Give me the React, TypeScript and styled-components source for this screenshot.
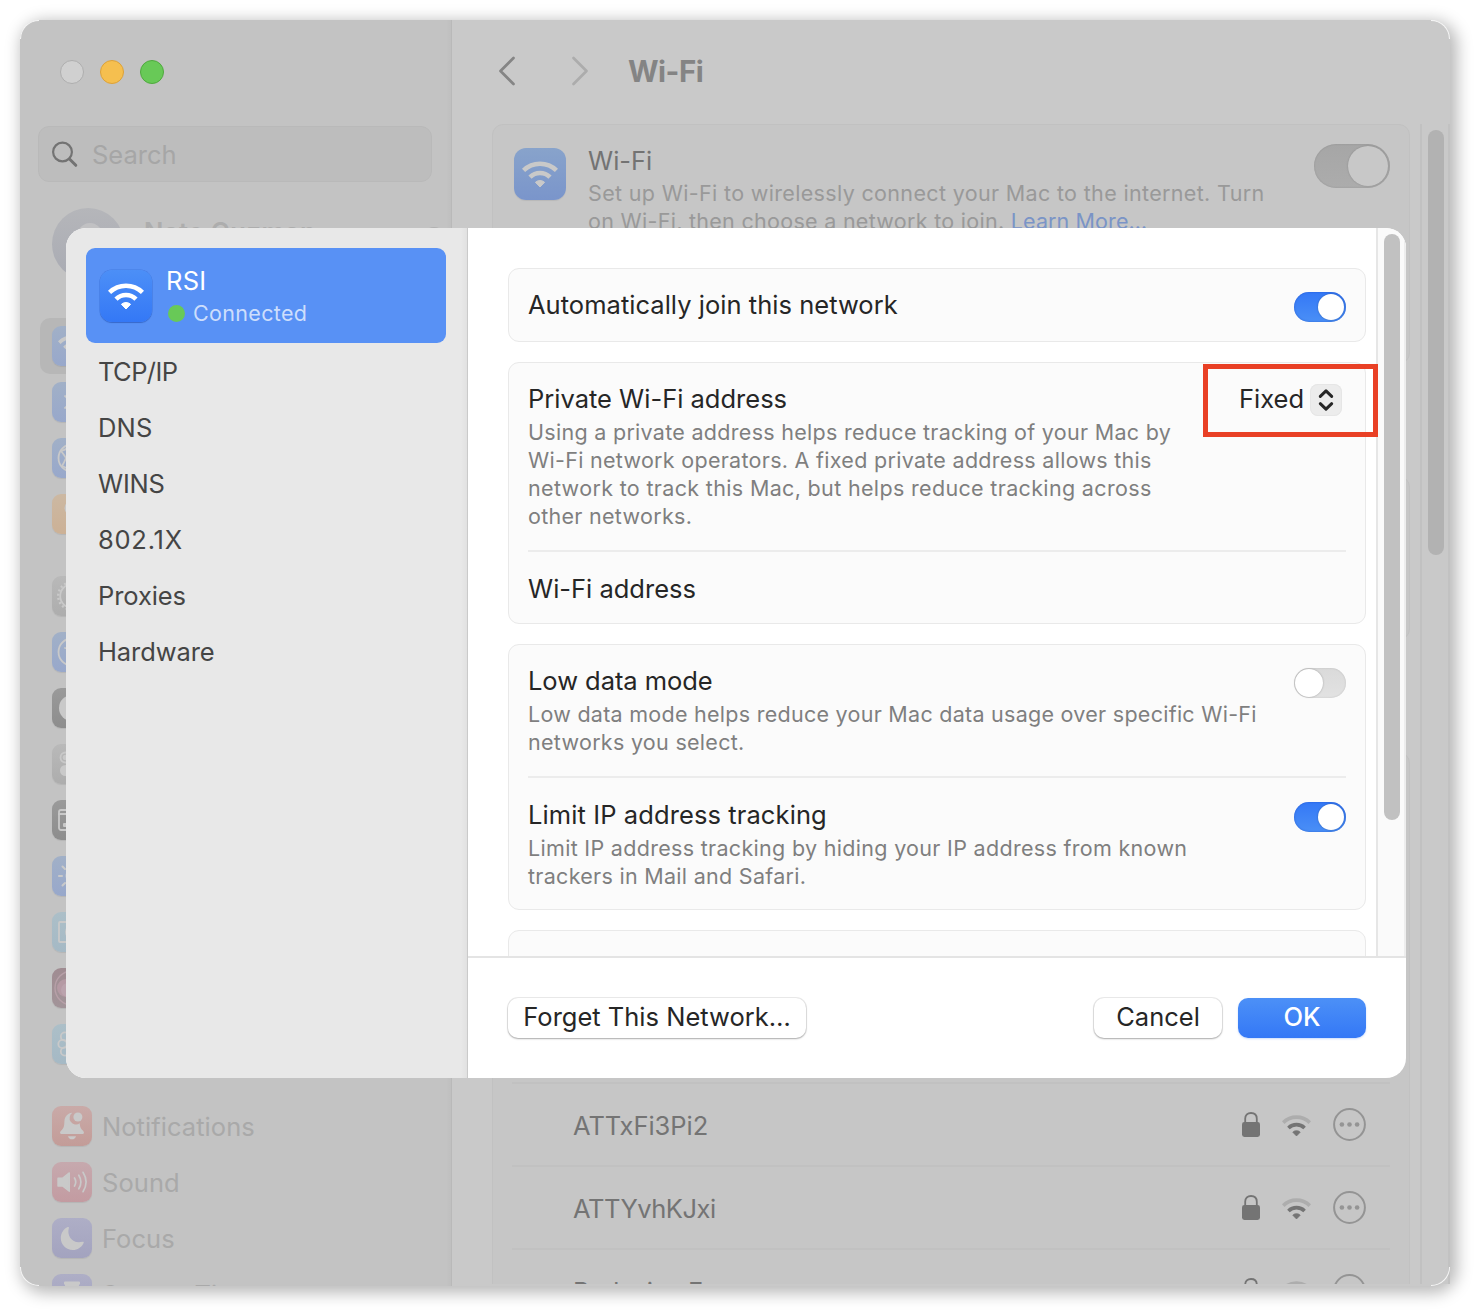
import React from "react";
import styled, { createGlobalStyle, css } from "styled-components";

const GlobalStyle = createGlobalStyle`
  *, *::before, *::after { box-sizing: border-box; }
  body {
    margin: 0;
    background: #fff;
    font-family: Inter, "Liberation Sans", sans-serif;
    font-size: 25.5px;
  }
  svg { display: block; flex: none; }
`;

/* ---------- window ---------- */

const Desktop = styled.div`
  width: 1480px;
  height: 1316px;
  padding: 20px 30px 30px 20px;
  overflow: hidden;
`;

const Window = styled.div`
  position: relative;
  display: grid;
  grid-template-columns: 432px 1fr;
  width: 1430px;
  height: 1266px;
  border-radius: 20px;
  background: #c9c9c9;
  box-shadow: 4px 4px 16px 3px rgba(0, 0, 0, 0.28);
`;

const Corner = styled.span<{ $v: "top" | "bottom"; $h: "left" | "right" }>`
  position: absolute;
  ${(p) => p.$v}: 0;
  ${(p) => p.$h}: 0;
  width: 19px;
  height: 19px;
  border: 0 solid rgba(255, 255, 255, 0.85);
  border-${(p) => p.$v}-width: 1px;
  border-${(p) => p.$h}-width: 1px;
  border-${(p) => p.$v}-${(p) => p.$h}-radius: 20px;
`;

/* ---------- sidebar ---------- */

const Sidebar = styled.aside`
  display: flex;
  flex-direction: column;
  height: 1266px;
  overflow: hidden;
  border-right: 1px solid #b9b9b9;
  border-radius: 20px 0 0 20px;
  background: linear-gradient(to right, transparent 426px, rgba(0, 0, 0, 0.02)), #c3c3c3;
`;

const TrafficLights = styled.div`
  display: flex;
  gap: 16px;
  padding: 40px 0 0 40px;
`;

const Light = styled.span<{ $fill: string; $edge: string }>`
  width: 24px;
  height: 24px;
  border: 1px solid ${(p) => p.$edge};
  border-radius: 50%;
  background: ${(p) => p.$fill};
`;

const SearchField = styled.div`
  display: flex;
  align-items: center;
  gap: 14px;
  flex: none;
  height: 56px;
  margin: 42px 19px 0 18px;
  padding-left: 12px;
  border: 1px solid #b9b9b9;
  border-radius: 11px;
  background: #bdbdbd;
  color: #a6a6a6;
`;

const Profile = styled.div`
  display: flex;
  gap: 20px;
  flex: none;
  height: 72px;
  margin: 26px 6px 38px 32px;
`;

const Avatar = styled.span`
  display: flex;
  justify-content: center;
  width: 72px;
  height: 72px;
  padding-top: 15px;
  border-radius: 50%;
  background: linear-gradient(#b5b6ba, #a9abb3);
`;

const AvatarHead = styled.span`
  width: 28px;
  height: 32px;
  margin-left: 3px;
  border-radius: 50%;
  background: #c1c1c3;
`;

const ProfileName = styled.span`
  flex: 1;
  padding-top: 8px;
  line-height: 32px;
  font-weight: 600;
  letter-spacing: 0.5px;
  color: #adadad;
`;

const ProfileBadge = styled.span`
  width: 22px;
  height: 22px;
  margin-top: 19px;
  border-radius: 50%;
  background: #b0b0b0;
`;

const NavGroup = styled.nav`
  display: flex;
  flex-direction: column;
  flex: none;
  margin: 0 18px 26px 20px;
`;

const NavRow = styled.div<{ $selected?: boolean }>`
  display: flex;
  align-items: center;
  gap: 10px;
  height: 56px;
  padding-left: 12px;
  border-radius: 10px;
  background: ${(p) => (p.$selected ? "#b7b7b7" : "transparent")};
  color: #a9a9a9;
  letter-spacing: 0.05px;
`;

const Tile = styled.span<{ $size: number; $from: string; $to: string; $ring?: boolean }>`
  display: flex;
  align-items: center;
  justify-content: center;
  flex: none;
  width: ${(p) => p.$size}px;
  height: ${(p) => p.$size}px;
  border-radius: ${(p) => (p.$size > 40 ? 12 : 9)}px;
  background: linear-gradient(${(p) => p.$from}, ${(p) => p.$to});
  box-shadow: 0 1px 1px rgba(0, 0, 0, 0.07);
  ${(p) => p.$ring && css`box-shadow: 0 0 0 0.5px rgba(30, 80, 190, 0.35), 0 1px 1px rgba(20, 60, 150, 0.4);`}
`;

/* ---------- main pane ---------- */

const Main = styled.main`
  display: grid;
  grid-template-rows: 104px 1fr;
  height: 1264px;
  overflow: hidden;
`;

const Toolbar = styled.header`
  display: flex;
  align-items: center;
  padding: 0 0 2px 46px;
`;

const Title = styled.h1`
  margin: 0 0 0 39px;
  font-size: 29.5px;
  font-weight: 700;
  letter-spacing: -0.5px;
  line-height: 36px;
  color: #848484;
`;

const Nav = styled.span`
  margin-right: 55px;
  & + & { margin-right: 0; }
`;

const Scroller = styled.div`
  display: grid;
  grid-template-columns: 1fr 30px;
  min-height: 0;
`;

const Panels = styled.div`
  display: flex;
  flex-direction: column;
  gap: 112px;
  height: 1160px;
  padding: 0 10px 0 40px;
  overflow: hidden;
`;

const Panel = styled.section<{ $height?: number }>`
  flex: none;
  height: ${(p) => (p.$height ? `${p.$height}px` : "auto")};
  border: 1px solid #c1c1c1;
  border-radius: 11px;
  background: #c6c6c6;
`;

const WifiHeader = styled.div`
  display: flex;
  padding: 19px 19px 0 21px;
`;

const WifiCopy = styled.div`
  flex: 1;
  margin-left: 22px;
  color: #737373;
  line-height: 34px;
`;

const WifiTile = styled.div`
  padding-top: 4px;
`;

const Caption = styled.div<{ $color?: string }>`
  font-size: 21.5px;
  line-height: 28px;
  letter-spacing: 0.29px;
  white-space: nowrap;
  margin-top: ${(p) => (p.$color ? 1 : -1)}px;
  padding-bottom: ${(p) => (p.$color ? 0 : 1)}px;
  color: ${(p) => p.$color ?? "#7f7f7f"};
`;

const Line = styled.span<{ $spacing: number }>`
  letter-spacing: ${(p) => p.$spacing}px;
`;

const Link = styled.span`
  letter-spacing: 0.1px;
  color: #7a94c6;
`;

const Track = styled.div<{ $line: string; $edge: string; $bg: string }>`
  display: flex;
  justify-content: center;
  padding: 6px 0 6px 2px;
  border-left: 2px solid ${(p) => p.$line};
  border-right: 2px solid ${(p) => p.$edge};
  background: ${(p) => p.$bg};
`;

const Thumb = styled.span<{ $height: number; $color: string }>`
  width: 16px;
  height: ${(p) => p.$height}px;
  border-radius: 8px;
  background: ${(p) => p.$color};
`;

const NetworkList = styled.div`
  padding: 329px 19px 0;
`;

const NetworkRow = styled.div`
  display: flex;
  align-items: center;
  height: 83px;
  padding: 0 24px 0 61px;
  border-top: 2px solid #c1c1c1;
  color: #747474;
`;

const NetworkName = styled.span<{ $spacing: number }>`
  flex: 1;
  padding-top: 2px;
  letter-spacing: ${(p) => p.$spacing}px;
`;

const NetworkIcons = styled.span`
  display: flex;
  align-items: center;
  gap: 22px;
`;

const Signal = styled.span`
  padding-top: 2px;
`;

/* ---------- toggle ---------- */

const Switch = styled.span<{ $on: boolean; $large?: boolean }>`
  display: flex;
  align-items: center;
  justify-content: ${(p) => (p.$on ? "flex-end" : "flex-start")};
  flex: none;
  width: ${(p) => (p.$large ? 76 : 52)}px;
  height: ${(p) => (p.$large ? 44 : 30)}px;
  padding: ${(p) => (p.$on ? 2 : 1)}px;
  border-radius: 22px;
  background: ${(p) =>
    p.$large
      ? "linear-gradient(#a6a6a6, #acacac)"
      : p.$on
        ? "linear-gradient(#3478f6, #4a8ff6)"
        : "linear-gradient(#dadada, #e2e2e2)"};
  box-shadow: inset 0 0 2px ${(p) => (p.$on && !p.$large ? "rgba(20, 70, 190, 0.7)" : "rgba(0, 0, 0, 0.16)")};
  &::after {
    content: "";
    width: ${(p) => (p.$large ? 40 : p.$on ? 26 : 28)}px;
    height: ${(p) => (p.$large ? 40 : p.$on ? 26 : 28)}px;
    border-radius: 50%;
    background: ${(p) => (p.$large ? "#c8c8c8" : "#fff")};
    box-shadow: 0 0 2px rgba(0, 0, 0, ${(p) => (p.$large ? 0.2 : 0.3)});
  }
`;

/* ---------- sheet ---------- */

const Sheet = styled.div`
  position: absolute;
  top: 208px;
  left: 46px;
  display: grid;
  grid-template-columns: 402px 1fr;
  width: 1340px;
  height: 850px;
  overflow: hidden;
  border-radius: 20px;
  background: #fff;
`;

const SheetNav = styled.nav`
  display: flex;
  flex-direction: column;
  padding: 20px 21px 0 20px;
  border-right: 1px solid #cacaca;
  background: linear-gradient(to right, transparent 395px, rgba(0, 0, 0, 0.03)), #e8e8e8;
`;

const ActiveNetwork = styled.div`
  display: flex;
  height: 95px;
  padding: 22px 0 0 14px;
  border-radius: 9px;
  background: #5891f5;
  color: #fff;
`;

const ActiveCopy = styled.div`
  margin: -6px 0 0 14px;
  line-height: 34px;
  letter-spacing: 0.3px;
`;

const Status = styled.div`
  display: flex;
  align-items: center;
  gap: 8px;
  margin: 0 0 0 2px;
  font-size: 21.5px;
  line-height: 30px;
  letter-spacing: 0.32px;
  color: #cddefc;
  &::before {
    content: "";
    width: 17px;
    height: 17px;
    border-radius: 50%;
    background: #68c957;
  }
`;

const SheetItem = styled.div<{ $spacing?: number }>`
  height: 56px;
  padding: 0 0 0 12px;
  line-height: 57px;
  letter-spacing: ${(p) => p.$spacing ?? 0}px;
  color: #454545;
`;

const SheetBody = styled.div`
  display: grid;
  grid-template-rows: 728px 1fr;
`;

const SheetScroll = styled.div`
  display: grid;
  grid-template-columns: 1fr 30px;
  min-height: 0;
`;

const Cards = styled.div`
  display: flex;
  flex-direction: column;
  gap: 20px;
  height: 728px;
  padding: 40px 10px 0 40px;
  overflow: visible clip;
  z-index: 1;
`;

const Card = styled.section<{ $height: number }>`
  flex: none;
  height: ${(p) => p.$height}px;
  padding: 0 19px;
  border: 1px solid #e9e9e9;
  border-radius: 11px;
  background: #fbfbfb;
  color: #262626;
`;

const Setting = styled.div<{ $top: number; $divided?: boolean }>`
  display: flex;
  justify-content: space-between;
  padding: ${(p) => p.$top}px 0 ${(p) => (p.$divided ? 19 : 0)}px;
  ${(p) => p.$divided && css`border-bottom: 2px solid #ececec;`}
`;

const Label = styled.div<{ $spacing?: number }>`
  line-height: 40px;
  letter-spacing: ${(p) => p.$spacing ?? 0}px;
`;

const SwitchSlot = styled.div`
  padding-top: 7px;
`;

const Picker = styled.div`
  display: flex;
  align-items: center;
  align-self: flex-start;
  height: 73px;
  width: 175px;
  margin: -15px -32px -20px 0;
  padding: 0 31px 2px 31px;
  border: 5px solid #e94025;
`;

const PickerValue = styled.span`
  flex: none;
  width: 71px;
  margin-top: -2px;
`;

const Stepper = styled.span`
  flex: none;
  width: 32px;
  height: 32px;
  margin-top: 1px;
  border-radius: 8px;
  background: #ececec;
  box-shadow: inset 0 0 0 1px #e6e6e6;
`;

const Footer = styled.footer`
  display: flex;
  align-items: flex-start;
  gap: 16px;
  padding: 40px 40px 0;
  border-top: 2px solid #e4e4e4;
`;

const Button = styled.button<{ $width: number; $primary?: boolean }>`
  width: ${(p) => p.$width}px;
  height: 40px;
  padding: 0 0 2px;
  border: 0;
  border-radius: 10px;
  font: inherit;
  font-weight: ${(p) => (p.$primary ? 500 : 400)};
  line-height: 38px;
  white-space: nowrap;
  color: ${(p) => (p.$primary ? "#fff" : "#262626")};
  background: ${(p) => (p.$primary ? "linear-gradient(#4c90f7, #3478f6)" : "#fff")};
  box-shadow: ${(p) =>
    p.$primary
      ? "0 1px 2px rgba(52, 120, 246, 0.25)"
      : "0 0 0 1px rgba(0, 0, 0, 0.08), 0 1px 2px rgba(0, 0, 0, 0.28)"};
`;

const Spacer = styled.span`
  flex: 1;
`;

/* ---------- icons ---------- */

const Wifi = ({ width, color, outer }: { width: number; color: string; outer?: string }) => (
  <svg width={width} height={width * 0.75} viewBox="0 0 36 27" fill="none">
    <path d="M1.5 9.4A23.7 23.7 0 0 1 34.5 9.4" stroke={outer ?? color} strokeWidth="4.6" />
    <path d="M8 16.1A14.4 14.4 0 0 1 28 16.1" stroke={color} strokeWidth="4.6" />
    <path d="M18 26L13.4 21.3A6.8 6.8 0 0 1 22.6 21.3Z" fill={color} stroke={color} strokeWidth="1" strokeLinejoin="round" />
  </svg>
);

const Chevron = ({ forward }: { forward?: boolean }) => (
  <svg width="18" height="30" viewBox="0 0 18 30" fill="none" stroke={forward ? "#acacac" : "#858585"} strokeWidth="2.7" strokeLinecap="round" strokeLinejoin="round">
    <path d={forward ? "M2.5 2L15.5 15L2.5 28" : "M15.5 2L2.5 15L15.5 28"} />
  </svg>
);

const Magnifier = () => (
  <svg width="27" height="28" viewBox="0.5 0 27 28" fill="none" stroke="#737373" strokeLinecap="round">
    <circle cx="12" cy="12" r="9.4" strokeWidth="2.2" />
    <path d="M19 19L25.3 25.3" strokeWidth="3" />
  </svg>
);

const Lock = () => (
  <svg width="18" height="25" viewBox="0 0.5 18 25" fill="none">
    <rect y="10.5" width="18" height="15" rx="2.4" fill="#747474" />
    <path d="M3.2 11V7.3C3.2 3.6 5.6 1.5 9 1.5S14.8 3.6 14.8 7.3V11" stroke="#747474" strokeWidth="1.8" />
  </svg>
);

const More = () => (
  <svg width="33" height="33" viewBox="0.5 0.5 33 33" fill="#949494">
    <circle cx="17" cy="17" r="15.4" fill="none" stroke="#949494" strokeWidth="2" />
    <circle cx="9.4" cy="17" r="2.3" />
    <circle cx="17" cy="17" r="2.3" />
    <circle cx="24.6" cy="17" r="2.3" />
  </svg>
);

const ink = "#c9c9c9";

const Glyph = ({ children }: { children: React.ReactNode }) => (
  <svg width="40" height="40" viewBox="0 0 40 40" fill="none" stroke={ink} strokeWidth="1.8" strokeLinecap="round" strokeLinejoin="round">
    {children}
  </svg>
);

const glyphs: Record<string, React.ReactNode> = {
  wifi: <Wifi width={29} color={ink} />,
  bluetooth: <Glyph><path d="M13 14L27 26L20 32V8L27 14L13 26" /></Glyph>,
  network: (
    <Glyph>
      <circle cx="20" cy="20" r="13.5" />
      <path d="M9 13Q13 18 14 20Q12 25 10 28M14 20H26M20 7Q16 11 9 13M20 33Q15 30 10 28M20 7Q24 11 31 13M20 33Q25 30 30 28" />
    </Glyph>
  ),
  energy: <Glyph><circle cx="20" cy="14" r="7.5" fill={ink} stroke="none" /></Glyph>,
  general: (
    <Glyph>
      <circle cx="20" cy="20" r="11.8" />
      <circle cx="20" cy="20" r="13.8" strokeWidth="2.4" strokeDasharray="2 2.34" strokeLinecap="butt" />
      <circle cx="20" cy="20" r="4" />
      <path d="M22 17L26 10M24 20H31M22 23L26 30" />
    </Glyph>
  ),
  accessibility: (
    <Glyph>
      <circle cx="20" cy="20" r="13.5" />
      <path d="M13 16L20 18L27 16M20 18V23L16 29M20 23L24 29" />
      <circle cx="20" cy="12.5" r="1.5" fill={ink} />
    </Glyph>
  ),
  appearance: <Glyph><circle cx="20" cy="20" r="13" fill={ink} stroke="none" /></Glyph>,
  control: (
    <Glyph>
      <rect x="8.5" y="8.5" width="23" height="10" rx="5" />
      <circle cx="13.5" cy="13.5" r="2.8" fill={ink} stroke="none" />
      <rect x="8" y="21" width="24" height="11" rx="5.5" fill={ink} stroke="none" />
    </Glyph>
  ),
  dock: (
    <Glyph>
      <rect x="7" y="10" width="26" height="20" rx="2" />
      <path d="M7 14H33" />
      <rect x="11" y="23" width="18" height="4" rx="1" fill={ink} stroke="none" />
    </Glyph>
  ),
  displays: (
    <Glyph>
      <circle cx="20" cy="20" r="6.5" fill={ink} stroke="none" />
      <path d="M7 20H10M20 7V10M30 20H33M20 30V33M10.5 10.5L13 13M29.5 10.5L27 13M10.5 29.5L13 27M29.5 29.5L27 27" strokeWidth="2.1" />
    </Glyph>
  ),
  saver: (
    <Glyph>
      <rect x="7" y="10" width="26" height="20" rx="1" />
      <circle cx="20" cy="20" r="7" fill={ink} stroke="none" />
    </Glyph>
  ),
  siri: (
    <Glyph>
      <circle cx="20" cy="20" r="17" stroke="#b7a0a8" strokeWidth="1.4" />
      <circle cx="14" cy="20" r="9" fill="#b59aa4" stroke="none" />
      <circle cx="16" cy="22" r="7" fill="#bba3ad" stroke="none" />
    </Glyph>
  ),
  wallpaper: (
    <Glyph>
      <circle cx="13" cy="12.5" r="4.2" />
      <circle cx="10.5" cy="20" r="4.2" />
      <circle cx="13" cy="27.5" r="4.2" />
      <circle cx="27" cy="12.5" r="4.2" />
      <circle cx="29.5" cy="20" r="4.2" />
      <circle cx="27" cy="27.5" r="4.2" />
    </Glyph>
  ),
  notifications: (
    <Glyph>
      <g fill={ink} stroke="none">
        <path d="M20.3 6.8C15.5 7.2 12.6 10.8 12.4 15.4C12.2 20.5 11.8 21.8 9.2 24.6C8.4 25.5 7.9 26.1 8.1 27C8.3 27.7 8.9 28 9.7 28H30.3C31.1 28 31.7 27.7 31.9 27C32.1 26.1 31.6 25.5 30.8 24.6C28.6 22.2 28 21 27.7 17.3A6.3 6.3 0 0 1 20.3 6.8Z" />
        <path d="M16 30.2H24C23.5 32.3 22 33.3 20 33.3S16.5 32.3 16 30.2Z" />
        <circle cx="25.9" cy="11" r="4.5" />
      </g>
    </Glyph>
  ),
  sound: (
    <Glyph>
      <path d="M6 16.3H10.5L17.3 10.9V29.2L10.5 24H6Z" fill={ink} strokeWidth="1.4" />
      <path d="M22.5 16Q25 20 22.5 24M26.8 13.2Q31 20 26.8 26.8M31 10.3Q37.2 20 31 29.7" strokeWidth="1.7" />
    </Glyph>
  ),
  focus: (
    <Glyph>
      <path d="M15.2 9.2C15.9 8.8 17.2 8.7 16.9 9.8C14.5 18 20.5 26.3 30.5 23.8C31.7 23.5 32 24.1 31.6 25C29.7 29.3 25.6 32 20.8 32C14.2 32 8.8 26.7 8.8 20C8.8 15.3 11.4 11.2 15.2 9.2Z" fill={ink} stroke="none" />
    </Glyph>
  ),
  screentime: (
    <Glyph>
      <path d="M12 8.5Q12 7.6 13 7.6H27Q28 7.6 28 8.5V10.5H27Q27 16 22 20Q27 24 27 30H28V32.4H12V30H13Q13 24 18 20Q13 16 13 10.5H12Z" fill={ink} stroke="none" />
    </Glyph>
  ),
};

/* ---------- data ---------- */

type NavEntry = { glyph: string; from: string; to: string; label?: string; selected?: boolean };

const blue = { from: "#a1b0c7", to: "#98a8cb" };
const gray = { from: "#b9b9b9", to: "#adadad" };
const dark = { from: "#9a9a9a", to: "#8d8d8d" };
const cyan = { from: "#acbfc8", to: "#a5b9c5" };
const violet = { from: "#aeaec6", to: "#a3a3bf" };

const navGroups: NavEntry[][] = [
  [
    { glyph: "wifi", ...blue, selected: true },
    { glyph: "bluetooth", ...blue },
    { glyph: "network", ...blue },
    { glyph: "energy", from: "#ccb8a2", to: "#ccb196" },
  ],
  [
    { glyph: "general", ...gray },
    { glyph: "accessibility", ...blue },
    { glyph: "appearance", ...dark },
    { glyph: "control", ...gray },
    { glyph: "dock", ...dark },
    { glyph: "displays", ...blue },
    { glyph: "saver", ...cyan },
    { glyph: "siri", from: "#a08c92", to: "#a29499" },
    { glyph: "wallpaper", ...cyan },
  ],
  [
    { glyph: "notifications", from: "#c9aaa8", to: "#c39c98", label: "Notifications" },
    { glyph: "sound", from: "#c6a9ae", to: "#c39ba1", label: "Sound" },
    { glyph: "focus", ...violet, label: "Focus" },
    { glyph: "screentime", ...violet, label: "Screen Time" },
  ],
];

const networks = [
  { name: "ATTxFi3Pi2", spacing: -0.05 },
  { name: "ATTYvhKJxi", spacing: -0.48 },
  { name: "Bedesian F", spacing: -0.35 },
];

const sheetItems = [
  { name: "TCP/IP", spacing: -0.6 },
  { name: "DNS", spacing: 0.2 },
  { name: "WINS", spacing: -0.2 },
  { name: "802.1X", spacing: 0.75 },
  { name: "Proxies", spacing: -0.1 },
  { name: "Hardware", spacing: -0.1 },
];

export default function App() {
  return (
    <Desktop>
      <GlobalStyle />
      <Window>
        <Sidebar>
          <TrafficLights>
            <Light $fill="#d0d0d0" $edge="#aeaeae" />
            <Light $fill="#f5bf4f" $edge="#dca23a" />
            <Light $fill="#68c957" $edge="#50a93f" />
          </TrafficLights>
          <SearchField>
            <Magnifier />
            Search
          </SearchField>
          <Profile>
            <Avatar><AvatarHead /></Avatar>
            <ProfileName>Nate Guzman</ProfileName>
            <ProfileBadge />
          </Profile>
          {navGroups.map((group, i) => (
            <NavGroup key={i}>
              {group.map((entry) => (
                <NavRow key={entry.glyph} $selected={entry.selected}>
                  <Tile $size={40} $from={entry.from} $to={entry.to}>{glyphs[entry.glyph]}</Tile>
                  {entry.label}
                </NavRow>
              ))}
            </NavGroup>
          ))}
        </Sidebar>

        <Main>
          <Toolbar>
            <Nav><Chevron /></Nav>
            <Nav><Chevron forward /></Nav>
            <Title>Wi-Fi</Title>
          </Toolbar>
          <Scroller>
            <Panels>
              <Panel $height={240}>
                <WifiHeader>
                  <WifiTile>
                    <Tile $size={52} $from="#88a3cb" $to="#7a95cb"><Wifi width={36} color="#c9c9c9" /></Tile>
                  </WifiTile>
                  <WifiCopy>
                    Wi-Fi
                    <Caption $color="#999">
                      <Line $spacing={0.34}>Set up Wi-Fi to wirelessly connect your Mac to the internet. Turn</Line>
                      <br />
                      on Wi-Fi, then choose a network to join. <Link>Learn More…</Link>
                    </Caption>
                  </WifiCopy>
                  <Switch $on $large />
                </WifiHeader>
              </Panel>
              <Panel $height={164} />
              <Panel>
                <NetworkList>
                  {networks.map((n) => (
                    <NetworkRow key={n.name}>
                      <NetworkName $spacing={n.spacing}>{n.name}</NetworkName>
                      <NetworkIcons>
                        <Lock />
                        <Signal><Wifi width={29} color="#747474" outer="#adadad" /></Signal>
                        <More />
                      </NetworkIcons>
                    </NetworkRow>
                  ))}
                </NetworkList>
              </Panel>
            </Panels>
            <Track $line="#c1c1c1" $edge="#c2c2c2" $bg="#c9c9c9">
              <Thumb $height={425} $color="#b2b2b2" />
            </Track>
          </Scroller>
        </Main>

        <Corner $v="top" $h="left" />
        <Corner $v="top" $h="right" />
        <Corner $v="bottom" $h="left" />
        <Corner $v="bottom" $h="right" />

        <Sheet>
          <SheetNav>
            <ActiveNetwork>
              <Tile $size={52} $from="#4c8ff7" $to="#3478f6" $ring><Wifi width={36} color="#fff" /></Tile>
              <ActiveCopy>
                RSI
                <Status>Connected</Status>
              </ActiveCopy>
            </ActiveNetwork>
            {sheetItems.map((item) => (
              <SheetItem key={item.name} $spacing={item.spacing}>{item.name}</SheetItem>
            ))}
          </SheetNav>
          <SheetBody>
            <SheetScroll>
              <Cards>
                <Card $height={74}>
                  <Setting $top={16}>
                    <Label $spacing={0.03}>Automatically join this network</Label>
                    <SwitchSlot><Switch $on /></SwitchSlot>
                  </Setting>
                </Card>
                <Card $height={262}>
                  <Setting $top={16} $divided>
                    <div>
                      <Label>Private Wi-Fi address</Label>
                      <Caption>
                        Using a private address helps reduce tracking of your Mac by
                        <br />
                        Wi-Fi network operators. A fixed private address allows this
                        <br />
                        <Line $spacing={0.34}>network to track this Mac, but helps reduce tracking across</Line>
                        <br />
                        other networks.
                      </Caption>
                    </div>
                    <Picker>
                      <PickerValue>Fixed</PickerValue>
                      <Stepper>
                        <svg width="32" height="32" viewBox="0 0 32 32" fill="none" stroke="#262626" strokeWidth="3" strokeLinecap="round" strokeLinejoin="round">
                          <path d="M10.3 12.4L16 6.9L21.7 12.4M10.3 19.7L16 25.2L21.7 19.7" />
                        </svg>
                      </Stepper>
                    </Picker>
                  </Setting>
                  <Setting $top={17}>
                    <Label>Wi-Fi address</Label>
                  </Setting>
                </Card>
                <Card $height={266}>
                  <Setting $top={16} $divided>
                    <div>
                      <Label $spacing={-0.05}>Low data mode</Label>
                      <Caption>
                        <Line $spacing={0.27}>Low data mode helps reduce your Mac data usage over specific Wi-Fi</Line>
                        <br />
                        networks you select.
                      </Caption>
                    </div>
                    <SwitchSlot><Switch $on={false} /></SwitchSlot>
                  </Setting>
                  <Setting $top={17}>
                    <div>
                      <Label $spacing={0.1}>Limit IP address tracking</Label>
                      <Caption>
                        <Line $spacing={0.31}>Limit IP address tracking by hiding your IP address from known</Line>
                        <br />
                        trackers in Mail and Safari.
                      </Caption>
                    </div>
                    <SwitchSlot><Switch $on /></SwitchSlot>
                  </Setting>
                </Card>
                <Card $height={74} />
              </Cards>
              <Track $line="#e6e6e6" $edge="#ededed" $bg="#fafafa">
                <Thumb $height={586} $color="#c1c1c1" />
              </Track>
            </SheetScroll>
            <Footer>
              <Button $width={298}>Forget This Network…</Button>
              <Spacer />
              <Button $width={128}>Cancel</Button>
              <Button $width={128} $primary>OK</Button>
            </Footer>
          </SheetBody>
        </Sheet>
      </Window>
    </Desktop>
  );
}
